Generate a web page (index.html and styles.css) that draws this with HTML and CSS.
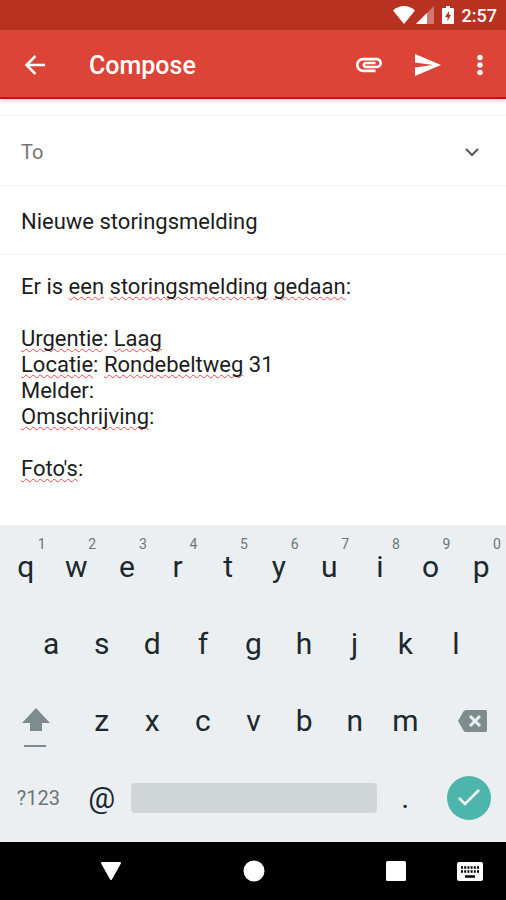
FILE: index.html
```html
<!DOCTYPE html>
<html lang="nl">
<head>
<meta charset="utf-8">
<meta name="viewport" content="width=device-width, initial-scale=1">
<title>Compose</title>
<link rel="stylesheet" href="styles.css">
</head>
<body>
<div class="status">
  <svg class="wifi" viewBox="0 0 24 20" aria-hidden="true"><path d="M12 19 1 5.500C4 2.500 8 1 12 1s8 1.500 11 4.500z"/></svg>
  <svg class="signal" viewBox="0 0 18 18" aria-hidden="true"><path class="faded" d="M0 18 18 0v18z"/><path d="M0 18 11 7v11z"/></svg>
  <svg class="battery" viewBox="0 0 12 18" aria-hidden="true"><path fill-rule="evenodd" d="M4 0h4v2h3a1 1 0 0 1 1 1v14a1 1 0 0 1-1 1H1a1 1 0 0 1-1-1V3a1 1 0 0 1 1-1h3zM7 5l-4 6h2.500v4L9 9H7z"/></svg>
  <span class="time">2:57</span>
</div>
<header class="appbar">
  <button class="icon-btn" type="button" aria-label="Back"><svg class="back" viewBox="0 0 20 20"><path d="M20 10H2M10.500 1 1.500 10l9 9"/></svg></button>
  <h1 class="title">Compose</h1>
  <div class="actions">
    <button class="icon-btn" type="button" aria-label="Attach"><svg class="clip" viewBox="2 6.500 20 12"><path d="M2 12.500C2 9.460 4.460 7 7.500 7H18c2.210 0 4 1.790 4 4s-1.790 4-4 4H9.500C8.120 15 7 13.880 7 12.500S8.120 10 9.500 10H17v2H9.410c-.55 0-.55 1 0 1H18c1.100 0 2-.9 2-2s-.9-2-2-2H7.500C5.570 9 4 10.570 4 12.500S5.570 16 7.500 16H17v2H7.500C4.460 18 2 15.540 2 12.500z"/></svg></button>
    <button class="icon-btn" type="button" aria-label="Send"><svg class="send" viewBox="0 0 26 22"><path d="M0 22 26 11 0 0v8.500L18 11 0 13.500z"/></svg></button>
    <button class="icon-btn slim" type="button" aria-label="More options"><svg class="more" viewBox="0 0 6 22"><circle cx="3" cy="3.500" r="2.700"/><circle cx="3" cy="11" r="2.700"/><circle cx="3" cy="18.500" r="2.700"/></svg></button>
  </div>
</header>
<main class="compose">
  <div class="strip"></div>
  <div class="row to-row">
    <label class="label" for="to">To</label>
    <input class="field" id="to" type="text">
    <button class="expand" type="button" aria-label="Add Cc/Bcc"><svg class="chevron" viewBox="0 0 14 9"><path d="m1 1 6 6 6-6"/></svg></button>
  </div>
  <div class="row">
    <input class="field" type="text" aria-label="Subject" value="Nieuwe storingsmelding" spellcheck="false">
  </div>
  <div class="message" contenteditable="true" role="textbox" aria-multiline="true" aria-label="Message" spellcheck="false">
    <div>Er is <span class="typo">een</span> <span class="typo">storingsmelding</span> <span class="typo">gedaan</span>:</div>
    <div><br></div>
    <div><span class="typo">Urgentie</span>: <span class="typo">Laag</span></div>
    <div><span class="typo">Locatie</span>: <span class="typo">Rondebeltweg</span> 31</div>
    <div>Melder:</div>
    <div><span class="typo">Omschrijving</span>:</div>
    <div><br></div>
    <div><span class="typo">Foto's</span>:</div>
  </div>
</main>
<section class="keyboard" aria-label="Keyboard">
  <div class="keys">
    <button class="key" type="button">q<span class="hint">1</span></button>
    <button class="key" type="button">w<span class="hint">2</span></button>
    <button class="key" type="button">e<span class="hint">3</span></button>
    <button class="key" type="button">r<span class="hint">4</span></button>
    <button class="key" type="button">t<span class="hint">5</span></button>
    <button class="key" type="button">y<span class="hint">6</span></button>
    <button class="key" type="button">u<span class="hint">7</span></button>
    <button class="key" type="button">i<span class="hint">8</span></button>
    <button class="key" type="button">o<span class="hint">9</span></button>
    <button class="key" type="button">p<span class="hint">0</span></button>
  </div>
  <div class="keys">
    <button class="key indent" type="button">a</button>
    <button class="key" type="button">s</button>
    <button class="key" type="button">d</button>
    <button class="key" type="button">f</button>
    <button class="key" type="button">g</button>
    <button class="key" type="button">h</button>
    <button class="key" type="button">j</button>
    <button class="key" type="button">k</button>
    <button class="key" type="button">l</button>
  </div>
  <div class="keys">
    <button class="key wide shift-key" type="button" aria-label="Shift"><svg class="shift" viewBox="0 0 28 40"><path d="M14 0 28 15h-8v8H8v-8H0z"/><path d="M2 37h22v2H2z"/></svg></button>
    <button class="key" type="button">z</button>
    <button class="key" type="button">x</button>
    <button class="key" type="button">c</button>
    <button class="key" type="button">v</button>
    <button class="key" type="button">b</button>
    <button class="key" type="button">n</button>
    <button class="key" type="button">m</button>
    <button class="key wide delete-key" type="button" aria-label="Backspace"><svg class="delete" viewBox="0 0 29 22"><path class="shape" d="M8 0h19a2 2 0 0 1 2 2v18a2 2 0 0 1-2 2H8q-1.500 0-2.500-1.500L0 11l5.500-9.500Q6.500 0 8 0z"/><path class="cross" d="m12 6 10 10M22 6 12 16"/></svg></button>
  </div>
  <div class="keys">
    <button class="key wide symbols" type="button">?123</button>
    <button class="key" type="button">@</button>
    <button class="key space" type="button" aria-label="Space"><span class="bar"></span></button>
    <button class="key" type="button">.</button>
    <button class="key wide" type="button" aria-label="Done"><span class="done"><svg class="check" viewBox="0 0 22 17"><path d="m1 9 6 6L21 1"/></svg></span></button>
  </div>
</section>
<nav class="navbar" aria-label="System">
  <button class="nav-btn nav-back" type="button" aria-label="Hide keyboard"><svg class="tri" viewBox="0 0 22 19"><path d="M2 1h18L11 17z"/></svg></button>
  <button class="nav-btn nav-home" type="button" aria-label="Home"><svg class="home" viewBox="0 0 22 22"><circle cx="11" cy="11" r="10.500"/></svg></button>
  <button class="nav-btn nav-recent" type="button" aria-label="Recent apps"><svg class="square" viewBox="0 0 20 20"><rect width="20" height="20" rx="1.500"/></svg></button>
  <button class="nav-btn nav-ime" type="button" aria-label="Switch keyboard"><svg class="ime" viewBox="0 0 26 19"><rect width="26" height="19" rx="2"/><path class="dots" d="M4 5.500h18M4 9.500h18"/><path class="spacebar" d="M8 14.500h10"/></svg></button>
</nav>
</body>
</html>
```
FILE: styles.css
```css
* { box-sizing: border-box; }

body {
  margin: 0;
  min-height: 100vh;
  display: flex;
  flex-direction: column;
  background: #fff;
  color: #1c1c1c;
  font-family: Roboto, "Liberation Sans", sans-serif;
}

button {
  margin: 0;
  padding: 0;
  border: 0;
  background: none;
  color: inherit;
  font: inherit;
}

svg { display: block; }

.status {
  height: 30px;
  padding-right: 9px;
  display: flex;
  align-items: center;
  justify-content: flex-end;
  background: #b93221;
  color: #fff;
  fill: #fff;
}
.wifi { width: 24px; height: 20px; }
.signal { width: 18px; height: 18px; }
.faded { opacity: 0.35; }
.battery { width: 12px; height: 18px; margin: 0 8px; }
.time { font-size: 18px; font-weight: 500; }

.appbar {
  height: 69px;
  padding: 2px 14px 0 16px;
  display: flex;
  align-items: center;
  background: #db4437;
  border-bottom: 2px solid #c5101a;
  box-shadow: 0 1px 4px rgba(0, 40, 30, 0.25);
  color: #fff;
}
.icon-btn {
  width: 38px;
  height: 48px;
  display: flex;
  align-items: center;
  justify-content: center;
}
.slim { width: 24px; }
.title {
  flex: 1;
  margin: 0 0 0 35px;
  padding-top: 2px;
  font-size: 25px;
  font-weight: 500;
  line-height: 32px;
}
.actions { display: flex; gap: 21px; }
.back { width: 20px; height: 20px; fill: none; stroke: #fff; stroke-width: 2.5; }
.clip { width: 26px; height: 16px; fill: #fff; }
.send { width: 26px; height: 22px; fill: #fff; }
.more { width: 6px; height: 22px; fill: #fff; }

.compose {
  flex: 1;
  display: flex;
  flex-direction: column;
}
.strip { height: 17px; border-bottom: 1px solid #f3f3f3; }
.row {
  height: 69px;
  padding: 3px 20px 0 21px;
  display: flex;
  align-items: center;
  border-bottom: 1px solid #f3f3f3;
}
.to-row { height: 70px; }
.label { color: #757575; font-size: 20px; }
.field {
  flex: 1;
  min-width: 0;
  padding: 0;
  border: 0;
  outline: 0;
  background: none;
  color: inherit;
  font: inherit;
  font-size: 22px;
  line-height: 26px;
}
.expand {
  width: 28px;
  height: 28px;
  display: flex;
  align-items: center;
  justify-content: center;
}
.chevron { width: 14px; height: 9px; fill: none; stroke: #555; stroke-width: 2; }

.message {
  flex: 1;
  padding: 19px 21px;
  outline: 0;
  font-size: 22px;
  line-height: 26px;
}
.typo {
  text-decoration: underline wavy #f04a4a 1px;
  text-decoration-skip-ink: none;
  text-underline-offset: 2px;
}

.keyboard {
  padding: 3px 0 6px;
  background: #eceff1;
  color: #1b282d;
}
.keys {
  display: grid;
  grid-template-columns: repeat(20, 1fr);
}
.key {
  position: relative;
  grid-column: span 2;
  height: 77px;
  padding-left: 1px;
  display: flex;
  align-items: center;
  justify-content: center;
  font-size: 30px;
}
.indent { grid-column: 2 / span 2; }
.wide { grid-column: span 3; }
.space { grid-column: span 10; padding: 0 3px 0 5px; }
.hint {
  position: absolute;
  top: 8px;
  right: 5px;
  color: #6b7679;
  font-size: 14px;
  line-height: 16px;
}
.shift-key { padding-right: 4px; }
.delete-key { padding-left: 8px; }
.shift { width: 28px; height: 40px; margin-top: 14px; fill: #7f8b8d; }
.delete { width: 29px; height: 22px; }
.shape { fill: #7f8b8d; }
.cross { stroke: #eceff1; stroke-width: 3; }
.symbols { color: #6b7679; font-size: 20px; }
.bar { width: 100%; height: 30px; border-radius: 4px; background: #d0d5d7; }
.done {
  width: 44px;
  height: 44px;
  display: flex;
  align-items: center;
  justify-content: center;
  border-radius: 50%;
  background: #4db6ac;
}
.check { width: 22px; height: 17px; fill: none; stroke: #fff; stroke-width: 2.5; }

.navbar {
  height: 58px;
  display: grid;
  grid-template-columns: 82fr 58fr 85fr 58fr 84fr 58fr 16fr 58fr 7fr;
  align-items: center;
  background: #000;
  fill: #fff;
}
.nav-btn {
  height: 48px;
  display: flex;
  align-items: center;
  justify-content: center;
}
.nav-back { grid-column: 2; }
.nav-home { grid-column: 4; }
.nav-recent { grid-column: 6; }
.nav-ime { grid-column: 8; }
.tri { width: 22px; height: 19px; stroke: #fff; stroke-width: 2; stroke-linejoin: round; }
.home { width: 22px; height: 22px; }
.square { width: 20px; height: 20px; }
.ime { width: 26px; height: 19px; }
.dots { stroke: #000; stroke-width: 2.5; stroke-dasharray: 2 1.200; }
.spacebar { stroke: #000; stroke-width: 2.5; }
```
